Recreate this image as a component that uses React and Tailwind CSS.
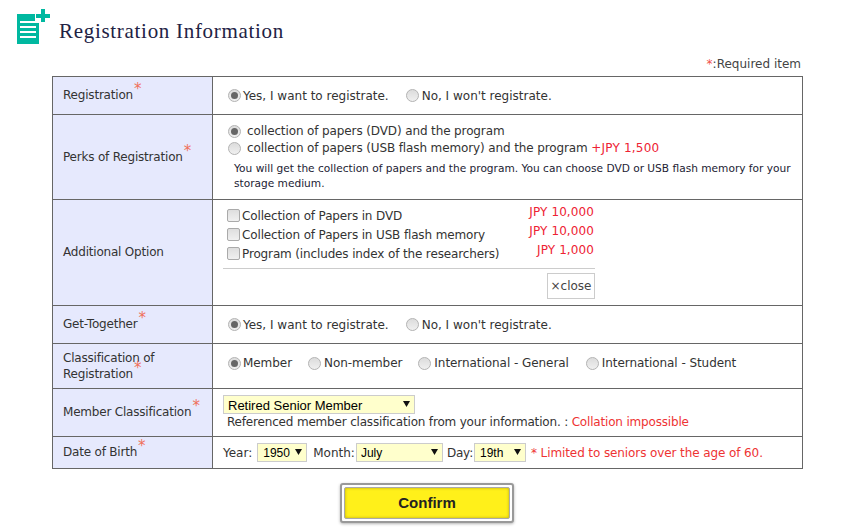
import React from "react";

const Req = () => (
  <span className="relative top-[-5px] ml-[1px] text-[15px] leading-none text-[#f0705a]">*</span>
);

const Radio = ({ checked }) => (
  <span className="inline-flex h-[13px] w-[13px] shrink-0 items-center justify-center rounded-full border border-[#b4b4b4] bg-gradient-to-b from-[#dcdcdc] to-[#f0f0f0]">
    {checked && <span className="h-[7px] w-[7px] rounded-full bg-[#666]" />}
  </span>
);

const Check = () => (
  <span className="h-[13px] w-[13px] shrink-0 rounded-[2px] border border-[#aaa] bg-gradient-to-b from-[#dedede] to-[#f0f0f0]" />
);

const RadioLabel = ({ checked, children, className }) => (
  <label className={`inline-flex items-center ${checked ? "gap-[2px]" : "gap-[3px]"} ${className || ""}`}>
    <Radio checked={checked} />
    <span>{children}</span>
  </label>
);

const Select = ({ value, className, textClass }) => (
  <span className={`relative inline-block ${className}`}>
    <select
      defaultValue={value}
      className={`h-full w-full appearance-none rounded-none border border-[#ccc] bg-[#ffffcc] text-black outline-none [font-family:'Liberation_Sans',Arial,sans-serif] ${textClass}`}
    >
      <option>{value}</option>
    </select>
    <svg className="pointer-events-none absolute right-[5px] top-[6px]" width="7" height="6" viewBox="0 0 7 6">
      <path d="M0 0h7L3.5 6z" fill="#111" />
    </svg>
  </span>
);

const Row = ({ label, rowClass, children }) => (
  <tr className={rowClass}>
    <th className="w-[160px] border border-[#666] bg-[#e6e9fd] pb-[1px] pl-[10px] pr-[2px] text-left align-middle font-normal leading-[16px] tracking-[-0.2px]">
      {label}
    </th>
    <td className="border border-[#666] pl-[10px] align-middle">{children}</td>
  </tr>
);

const YesNo = () => (
  <div className="flex items-center pl-[5px]">
    <RadioLabel checked>Yes, I want to registrate.</RadioLabel>
    <RadioLabel className="ml-[17px]">No, I won't registrate.</RadioLabel>
  </div>
);

const Option = ({ children }) => (
  <label className="flex h-[19px] items-center gap-[2px]">
    <Check />
    <span className="tracking-[-0.14px]">{children}</span>
  </label>
);

export default function App() {
  return (
    <div className="h-[530px] w-[849px] overflow-hidden bg-white text-[12px] text-[#333] [font-family:'DejaVu_Sans',Verdana,sans-serif]">
      <div className="flex h-[56px] items-start pl-[17px] pt-[9px]">
        <svg width="33" height="35" viewBox="0 0 33 35" className="shrink-0">
          <path d="M0 5h18v9h4v21H0z" fill="#00b8a0" />
          <path d="M3 12h16v2H3zM3 17h16v2H3zM3 22h16v2H3zM3 27h16v2H3z" fill="#fff" />
          <path d="M24 0h4v5h5v4h-5v4h-4V9h-5V5h5z" fill="#00b8a0" />
        </svg>
        <h1 className="ml-[9px] mt-[10px] text-[21px] font-normal leading-[24px] tracking-[0.7px] text-[#222244] [font-family:'Liberation_Serif','Times_New_Roman',serif]">
          Registration Information
        </h1>
      </div>

      <p className="mr-[48px] h-[20px] pt-[1px] text-right leading-[14px] text-[#444]">
        <span className="text-[#f0504a]">*</span>:Required item
      </p>

      <table className="ml-[52px] w-[751px] table-fixed border-collapse">
        <tbody>
          <Row label={<>Registration<Req /></>} rowClass="h-[38px]">
            <YesNo />
          </Row>

          <Row label={<>Perks of Registration<Req /></>} rowClass="h-[85px]">
            <div className="pl-[5px] leading-[17px] tracking-[-0.12px]">
              <div className="flex h-[17px] items-center gap-[6px]">
                <Radio checked />
                <span>collection of papers (DVD) and the program</span>
              </div>
              <div className="flex h-[17px] items-center gap-[6px]">
                <Radio />
                <span>
                  collection of papers (USB flash memory) and the program{" "}
                  <span className="tracking-[0.2px] text-[#ee2233]">+JPY 1,500</span>
                </span>
              </div>
            </div>
            <p className="mt-[4px] pl-[11px] pr-[4px] text-[10.6px] leading-[15px] text-[#223]">
              You will get the collection of papers and the program. You can choose DVD or USB flash memory for your storage medium.
            </p>
          </Row>

          <Row label="Additional Option" rowClass="h-[106px]">
            <div className="w-[372px]">
              <div className="flex justify-between border-b border-[#ccc] pb-[5px] pl-[4px]">
                <div>
                  <Option>Collection of Papers in DVD</Option>
                  <Option>Collection of Papers in USB flash memory</Option>
                  <Option>Program (includes index of the researchers)</Option>
                </div>
                <div className="pr-[1px] text-right leading-[19px] tracking-[0.1px] text-[#ee2233]">
                  <div className="mt-[-3px]">JPY 10,000</div>
                  <div>JPY 10,000</div>
                  <div>JPY 1,000</div>
                </div>
              </div>
              <div className="mt-[4px] flex justify-end">
                <span className="flex h-[26px] w-[48px] items-center justify-center border border-[#ccc] text-[#444]">
                  ×close
                </span>
              </div>
            </div>
          </Row>

          <Row label={<>Get-Together<Req /></>} rowClass="h-[38px]">
            <YesNo />
          </Row>

          <Row label={<>Classification of Registration<Req /></>} rowClass="h-[45px]">
            <div className="flex items-center pb-[6px] pl-[5px] tracking-[-0.06px]">
              <RadioLabel checked>Member</RadioLabel>
              <RadioLabel className="ml-[16px]">Non-member</RadioLabel>
              <RadioLabel className="ml-[16px]">International - General</RadioLabel>
              <RadioLabel className="ml-[17px]">International - Student</RadioLabel>
            </div>
          </Row>

          <Row label={<>Member Classification<Req /></>} rowClass="h-[48px]">
            <Select value="Retired Senior Member" className="block h-[19px] w-[192px]" textClass="pb-[2px] pl-[4px] text-[13px]" />
            <p className="pl-[4px] leading-[15px] tracking-[-0.18px]">
              Referenced member classification from your information. :{" "}
              <span className="text-[#ee3333]">Collation impossible</span>
            </p>
          </Row>

          <Row label={<>Date of Birth<Req /></>} rowClass="h-[32px]">
            <div className="flex items-center">
              <span className="mr-[4px]">Year:</span>
              <Select value="1950" className="ml-[1px] h-[19px] w-[50px]" textClass="pb-[1px] pl-[5px] text-[12px]" />
              <span className="ml-[6px]">Month:</span>
              <Select value="July" className="ml-[1px] h-[19px] w-[87px]" textClass="pb-[1px] pl-[4px] text-[12px]" />
              <span className="ml-[4px] tracking-[-0.2px]">Day:</span>
              <Select value="19th" className="ml-[1px] h-[19px] w-[52px]" textClass="pb-[1px] pl-[5px] text-[12px]" />
              <span className="ml-[5px] tracking-[-0.1px] text-[#ee3333]">* Limited to seniors over the age of 60.</span>
            </div>
          </Row>
        </tbody>
      </table>

      <div className="mt-[14px] flex justify-center pl-[5px]">
        <button className="h-[40px] w-[174px] rounded-[3px] border-2 border-[#999] bg-white p-[2px] shadow-[0_1px_3px_rgba(0,0,0,0.3)]">
          <span className="flex h-full w-full items-center justify-center rounded-[2px] border border-[#aaa] bg-[#fff01a] text-[15px] font-bold text-[#222] shadow-[inset_0_0_3px_rgba(120,100,0,0.55)] [font-family:'Liberation_Sans',Arial,sans-serif]">
            Confirm
          </span>
        </button>
      </div>
    </div>
  );
}
